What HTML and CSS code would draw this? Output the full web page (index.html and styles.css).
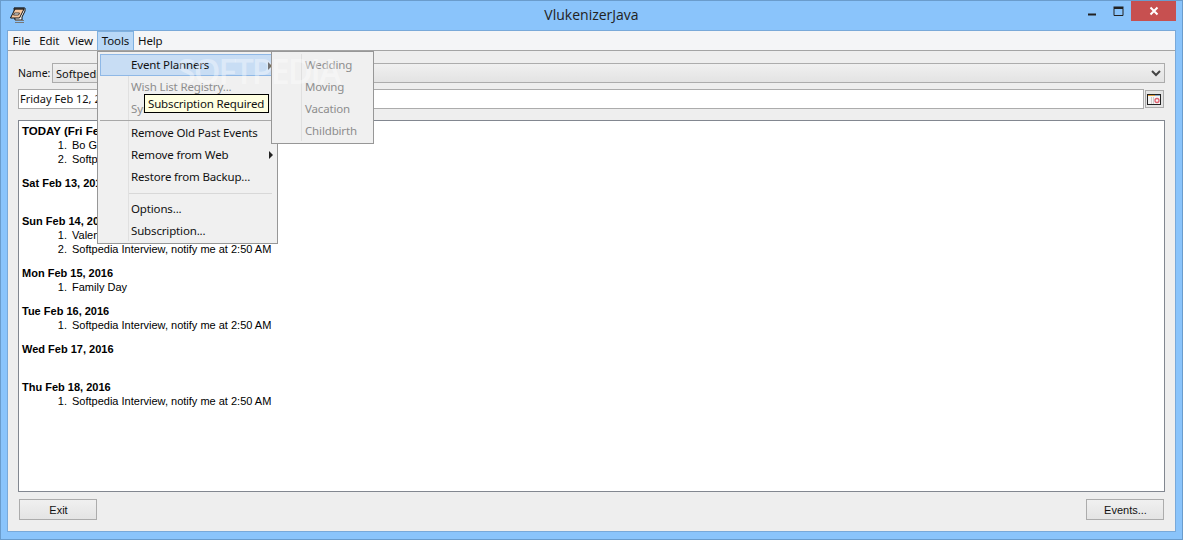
FILE: index.html
```html
<!DOCTYPE html>
<html lang="en">
<head>
<meta charset="utf-8">
<title>VlukenizerJava</title>
<link rel="stylesheet" href="styles.css">
</head>
<body>
<div class="window">
  <header class="titlebar">
    <svg class="app-icon" width="18" height="18" viewBox="0 0 18 18">
      <path d="M5 2h11v3l-3 6v3H6z" fill="#fff" stroke="#111"/>
      <path d="M1.500 12 6 3h9l-4.500 9z" fill="#f8c8a0" stroke="#111"/>
      <path d="M5.500 7h5l-1 2h-5z" fill="#fff" stroke="#111" stroke-width=".8"/>
      <path d="M6 1.500v2M8 1.500v2M10 1.500v2M12 1.500v2M14 1.500v2" stroke="#111"/>
      <path d="M6 14.500h9M6 16.500h9" stroke="#777"/>
    </svg>
    <span class="title">VlukenizerJava</span>
    <div class="controls">
      <span class="ctl"><svg width="10" height="10" viewBox="0 0 10 10"><path d="M1 8.500h8" stroke="#222" stroke-width="2"/></svg></span>
      <span class="ctl"><svg width="11" height="10" viewBox="0 0 11 10"><path d="M1 2.500h9v7H1z" fill="none" stroke="#222"/><path d="M.5 1.500h10" stroke="#222" stroke-width="2"/></svg></span>
      <span class="ctl close"><svg width="10" height="10" viewBox="0 0 10 10"><path d="M1.500 1.500l7 7M8.500 1.500l-7 7" stroke="#fff" stroke-width="2"/></svg></span>
    </div>
  </header>

  <div class="client">
    <nav class="menubar">
      <span class="mb">File</span><span class="mb">Edit</span><span class="mb">View</span><span class="mb active">Tools</span><span class="mb">Help</span>
    </nav>

    <main class="content">
      <div class="name-row">
        <label class="name-label">Name:</label>
        <div class="combo"><span>Softpedia</span>
          <svg class="chev" width="10" height="7" viewBox="0 0 10 7"><path d="M1 1l4 4 4-4" fill="none" stroke="#444" stroke-width="2"/></svg>
        </div>
      </div>
      <div class="date-row">
        <div class="date-input">Friday Feb 12, 2016</div>
        <button class="cal-btn" type="button" aria-label="Calendar">
          <svg width="14" height="11" viewBox="0 0 14 11"><rect x=".5" y=".5" width="13" height="10" fill="#f4f4f4" stroke="#222"/><path d="M1 1.500h7" stroke="#e0a040"/><path d="M8 1.500h5" stroke="#88a8c8"/><path d="M4.500 3v7M6.500 3v7" stroke="#ccc"/><circle cx="10" cy="6.500" r="2" fill="none" stroke="#e06070" stroke-width="1.300"/></svg>
        </button>
      </div>
      <section class="list">
        <h4 class="day first">TODAY (Fri Feb 12, 2016)</h4>
        <ol><li>Bo Gilbert</li><li>Softpedia Interview, notify me at 2:50 AM</li></ol>
        <h4 class="day">Sat Feb 13, 2016</h4>
        <ol class="empty"></ol>
        <h4 class="day">Sun Feb 14, 2016</h4>
        <ol><li>Valentine's Day</li><li>Softpedia Interview, notify me at 2:50 AM</li></ol>
        <h4 class="day">Mon Feb 15, 2016</h4>
        <ol><li>Family Day</li></ol>
        <h4 class="day">Tue Feb 16, 2016</h4>
        <ol><li>Softpedia Interview, notify me at 2:50 AM</li></ol>
        <h4 class="day">Wed Feb 17, 2016</h4>
        <ol class="empty"></ol>
        <h4 class="day">Thu Feb 18, 2016</h4>
        <ol><li>Softpedia Interview, notify me at 2:50 AM</li></ol>
      </section>
      <footer class="buttons">
        <button class="btn" type="button">Exit</button>
        <button class="btn" type="button">Events...</button>
      </footer>
    </main>
  </div>

  <div class="popup tools-menu">
    <div class="item hot">Event Planners<i class="arrow"></i></div>
    <div class="item off">Wish List Registry...</div>
    <div class="item off">Synchronize</div>
    <div class="sep sep-full"></div>
    <div class="item">Remove Old Past Events</div>
    <div class="item">Remove from Web<i class="arrow"></i></div>
    <div class="item">Restore from Backup...</div>
    <div class="sep sep-inset"></div>
    <div class="item">Options...</div>
    <div class="item">Subscription...</div>
  </div>
  <div class="popup sub-menu">
    <div class="item off">Wedding</div>
    <div class="item off">Moving</div>
    <div class="item off">Vacation</div>
    <div class="item off">Childbirth</div>
  </div>
  <div class="tooltip">Subscription Required</div>
  <div class="watermark">SOFTPEDIA</div>
</div>
</body>
</html>
```

FILE: styles.css
```css
* { box-sizing: border-box; }
html, body { margin: 0; height: 100%; overflow: hidden; }
body { font-family: "Noto Sans", "DejaVu Sans", sans-serif; color: #111; }

.window {
  position: relative;
  width: 1183px;
  height: 540px;
  background: #8ac4fb;
  border: 1px solid #6a9ccc;
  padding: 0 6px 7px;
  display: flex;
  flex-direction: column;
}

.titlebar { height: 29px; flex: none; display: flex; align-items: center; position: relative; }
.app-icon { position: absolute; left: 2px; top: 5px; }
.title { flex: 1; text-align: center; font: 14px "Open Sans", sans-serif; color: #222; padding-bottom: 1px; margin-top: -1px; }
.controls { position: absolute; right: 0; top: 0; display: flex; height: 20px; }
.ctl { width: 26px; display: flex; align-items: center; justify-content: center; }
.close { width: 45px; background: #c75050; }

.client {
  flex: 1;
  display: flex;
  flex-direction: column;
  background: #eee;
  border: 1px solid #79a9d9;
  min-height: 0;
}

.menubar {
  height: 20px;
  flex: none;
  display: flex;
  background: #f4f5f7;
  border-bottom: 1px solid #a4a4a4;
  font-size: 11.500px;
  letter-spacing: -.15px;
  line-height: 18px;
}
.mb { padding: 0 3.500px; border: 1px solid transparent; border-bottom: 0; }
.mb.active { background: #b9d8f7; border-color: #7eb0e0; }

.content { flex: 1; display: flex; flex-direction: column; padding: 12px 10px 11px; min-height: 0; font-size: 11px; }
.name-row { display: flex; align-items: center; height: 20px; margin-bottom: 6px; }
.name-label { width: 34px; font-size: 10.500px; flex: none; }
.combo {
  flex: 1;
  height: 20px;
  display: flex;
  align-items: center;
  justify-content: space-between;
  padding: 0 3px;
  background: linear-gradient(#f0f0f0, #e3e3e3);
  border: 1px solid #acacac;
  font-size: 11px;
}
.date-row { display: flex; align-items: center; gap: 1px; height: 20px; margin-bottom: 11px; }
.date-input { flex: 1; height: 20px; background: #fff; border: 1px solid #acacac; padding: 0 1px; font-size: 11px; line-height: 18px; }
.cal-btn { width: 19px; height: 18px; padding: 0 0 0 1px; background: #e4e4e4; border: 1px solid #acacac; display: flex; align-items: center; justify-content: flex-start; margin-right: 1px; }

.list {
  flex: 1;
  min-height: 0;
  background: #fff;
  border: 1px solid #828790;
  font-family: "Liberation Sans", Arial, sans-serif;
  font-size: 11px;
  line-height: 14px;
  padding: 3px;
  color: #000;
}
.day { margin: 10px 0 0; font-size: 11px; line-height: 14px; font-weight: 700; }
.day.first { margin-top: 0; font-size: 11.500px; }
.list ol { margin: 0; padding: 0 0 0 48px; }
.list li { padding-left: 2px; }
.list ol.empty { height: 14px; }

.buttons { display: flex; justify-content: space-between; padding: 7px 1px 0; flex: none; }
.btn {
  width: 78px;
  height: 21px;
  padding: 0 0 0 1px;
  background: linear-gradient(#f0f0f0, #e4e4e4);
  border: 1px solid #acacac;
  font: 11px "Liberation Sans", Arial, sans-serif;
  color: #111;
}

.popup {
  position: absolute;
  background: #f0f0f0;
  border: 1px solid #979797;
  padding: 2px;
  font-size: 11.500px;
  letter-spacing: -.15px;
  color: #111;
}
.popup::before { content: ""; position: absolute; top: 2px; bottom: 2px; width: 1px; background: #e0e0e0; }
.tools-menu { left: 96px; top: 50px; width: 181px; height: 193px; }
.tools-menu::before { left: 30px; }
.sub-menu { left: 270px; top: 50px; width: 103px; height: 93px; }
.sub-menu::before { left: 29px; }
.item { position: relative; height: 22px; line-height: 21px; padding-left: 31px; white-space: nowrap; }
.off { color: #8d8d8d; }
.hot { background: #c8ddf4; border: 1px solid #8fb8e6; line-height: 19px; padding-left: 30px; }
.sep { position: relative; height: 1px; background: #d8d8d8; }
.sep-full { margin: 0 -1px 1px 0; background: #a8a8a8; }
.sep-inset { margin: 5px 3px 4px 29px; }
.arrow { position: absolute; right: 2px; top: 7px; border-left: 4px solid #222; border-top: 4px solid transparent; border-bottom: 4px solid transparent; }

.tooltip {
  position: absolute;
  left: 143px;
  top: 93px;
  width: 125px;
  height: 19px;
  background: #ffffe1;
  border: 1px solid #000;
  font-size: 11.500px;
  letter-spacing: -.15px;
  line-height: 17px;
  padding-left: 3px;
  color: #111;
  white-space: nowrap;
}
.watermark {
  position: absolute;
  left: 176px;
  top: 47px;
  font: 600 34px "Open Sans", sans-serif;
  letter-spacing: -2px;
  color: rgba(255, 255, 255, .4);
  pointer-events: none;
}
```
